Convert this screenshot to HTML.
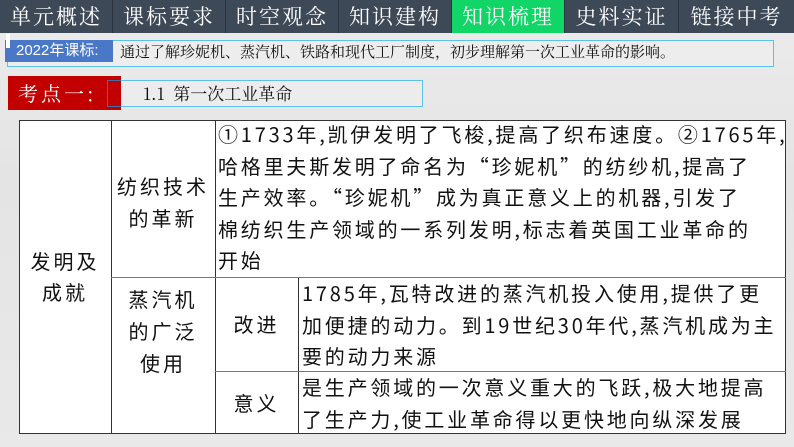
<!DOCTYPE html>
<html><head><meta charset="utf-8"><style>
*{margin:0;padding:0;box-sizing:border-box}
body{width:794px;height:447px;overflow:hidden;background:linear-gradient(180deg,#ececec 0%,#e4e4e4 40%,#e9e9e9 100%);font-family:"Noto Serif CJK SC","Liberation Serif",serif;position:relative}
.tabs{position:absolute;left:0;top:0;width:794px;height:33px;display:flex;background:#3e4958}
.tab{height:33px;color:#fff;font-size:21px;line-height:32px;text-align:center;border-right:1px solid #2c3440;letter-spacing:2px;font-family:"Noto Serif CJK SC",serif}
.tab.on{background:#12d567}
.abs{position:absolute}
.cell{position:absolute;font-family:"Noto Sans CJK SC",sans-serif;font-size:20px;color:#111;white-space:nowrap}
.c{text-align:center;letter-spacing:3px;line-height:32px}
.t{letter-spacing:2.8px;line-height:31.5px}
.ln{position:absolute;background:#333}
</style></head><body>
<div class="tabs">
<div class="tab" style="width:113px">单元概述</div>
<div class="tab" style="width:113px">课标要求</div>
<div class="tab" style="width:113px">时空观念</div>
<div class="tab" style="width:113px">知识建构</div>
<div class="tab on" style="width:113px">知识梳理</div>
<div class="tab" style="width:114px">史料实证</div>
<div class="tab" style="width:115px;border:none">链接中考</div>
</div>
<div class="abs" style="left:7px;top:40px;width:767px;height:27px;border:1px solid #5bc0ea;background:#ededed"></div>
<div class="abs" style="left:5px;top:40px;width:108px;height:22px;background:#4a78c8;color:#fff;font-family:'Liberation Sans','Noto Sans CJK SC',sans-serif;font-size:15px;line-height:22px;padding-left:11px">2022年课标:</div>
<div class="abs" style="left:6px;top:34px;width:4px;height:14px;background:#fff"></div>
<div class="abs" style="left:120px;top:41px;font-size:15px;line-height:22px;color:#111;font-family:'Noto Serif CJK SC',serif">通过了解珍妮机、蒸汽机、铁路和现代工厂制度，初步理解第一次工业革命的影响。</div>
<div class="abs" style="left:107px;top:80px;width:316px;height:27px;border:1px solid #5bc0ea;background:#ececec"></div>
<div class="abs" style="left:8px;top:76px;width:113px;height:34px;background:#c30000;color:#fff;font-size:20px;line-height:33px;padding-left:10px;letter-spacing:3px;font-family:'Noto Serif CJK SC',serif">考点一:</div>
<div class="abs" style="left:107px;top:80px;width:14px;height:27px;border:1px solid #3d6fa8;border-right:none"></div>
<div class="abs" style="left:143px;top:79px;font-size:17px;line-height:27px;color:#111;font-family:'Noto Serif CJK SC',serif">1.1&nbsp; 第一次工业革命</div>

<div class="abs" style="left:19px;top:120px;width:767px;height:314px;background:#fff;border:1px solid #333"></div>
<div class="ln" style="left:111px;top:120px;width:1px;height:314px"></div>
<div class="ln" style="left:215px;top:120px;width:1px;height:314px"></div>
<div class="ln" style="left:298px;top:277px;width:1px;height:157px"></div>
<div class="ln" style="left:111px;top:277px;width:675px;height:1px;background:#777"></div>
<div class="ln" style="left:215px;top:371px;width:571px;height:1px;background:#777"></div>

<div class="cell c" style="left:19px;top:245px;width:92px;line-height:31px">发明及<br>成就</div>
<div class="cell c" style="left:111px;top:170px;width:104px">纺织技术<br>的革新</div>
<div class="cell c" style="left:111px;top:283px;width:104px">蒸汽机<br>的广泛<br>使用</div>
<div class="cell c" style="left:215px;top:308px;width:83px">改进</div>
<div class="cell c" style="left:215px;top:387px;width:83px">意义</div>
<div class="cell t" style="left:218px;top:118px">①1733年,凯伊发明了飞梭,提高了织布速度。②1765年,<br>哈格里夫斯发明了命名为“珍妮机”的纺纱机,提高了<br>生产效率。“珍妮机”成为真正意义上的机器,引发了<br>棉纺织生产领域的一系列发明,标志着英国工业革命的<br>开始</div>
<div class="cell t" style="left:302px;top:277px">1785年,瓦特改进的蒸汽机投入使用,提供了更<br>加便捷的动力。到19世纪30年代,蒸汽机成为主<br>要的动力来源</div>
<div class="cell t" style="left:302px;top:371px">是生产领域的一次意义重大的飞跃,极大地提高<br>了生产力,使工业革命得以更快地向纵深发展</div>
</body></html>
